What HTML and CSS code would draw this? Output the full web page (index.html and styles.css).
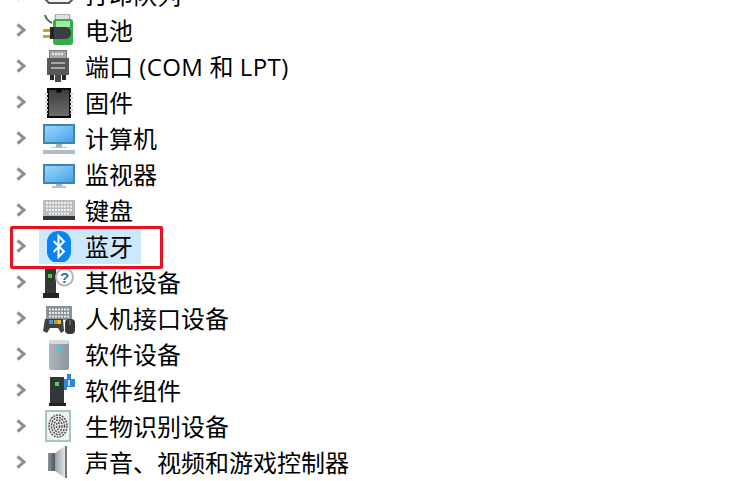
FILE: index.html
```html
<!DOCTYPE html>
<html lang="zh">
<head>
  <meta charset="utf-8">
  <title>设备管理器</title>
  <link rel="stylesheet" href="styles.css">
</head>
<body>
  <svg width="0" height="0" class="defs">
    <defs>
      <symbol id="chevron" viewBox="0 0 10 14">
        <path d="M1.500 1.500 8 7l-6.500 5.500"/>
      </symbol>
      <linearGradient id="screenFill" x1="0" y1="0" x2="1" y2="1">
        <stop offset="0" stop-color="#9ad6fc"/>
        <stop offset="1" stop-color="#47a3e6"/>
      </linearGradient>
      <linearGradient id="towerFill" x1="0" y1="0" x2="1" y2="0">
        <stop offset="0" stop-color="#aeb7bd"/>
        <stop offset="1" stop-color="#8b959c"/>
      </linearGradient>
      <linearGradient id="speakerBack" x1="0" y1="0" x2="1" y2="0">
        <stop offset="0" stop-color="#8d959c"/>
        <stop offset="1" stop-color="#4f575e"/>
      </linearGradient>
      <linearGradient id="speakerCone" x1="0" y1="0" x2="1" y2="0">
        <stop offset="0" stop-color="#9aa0a5"/>
        <stop offset="1" stop-color="#e2e4e6"/>
      </linearGradient>
      <linearGradient id="chipFill" x1="0" y1="0" x2="0" y2="1">
        <stop offset="0" stop-color="#3c3c3c"/>
        <stop offset="1" stop-color="#6e6e6e"/>
      </linearGradient>
    </defs>
  </svg>

  <ul class="tree">
    <li class="row">
      <svg class="chevron"><use href="#chevron"/></svg>
      <span class="item">
        <svg class="icon" viewBox="0 0 32 32">
          <path d="M1 12h30v8l-5 5H6l-5-5z" fill="#f2f3f3" stroke="#55595c" stroke-width="2"/>
        </svg>
        <span class="label">打印队列</span>
      </span>
    </li>
    <li class="row">
      <svg class="chevron"><use href="#chevron"/></svg>
      <span class="item">
        <svg class="icon" viewBox="0 0 32 32">
          <path d="M2 1c1 4 3 6 7 8" fill="none" stroke="#5f5f5f" stroke-width="2"/>
          <rect x="12" y="0" width="15" height="6" rx="2.500" fill="#dfe3df" stroke="#8a8a8a"/>
          <rect x="10" y="5" width="20" height="26" rx="3" fill="#33ad48"/>
          <rect x="13" y="7" width="14" height="6" fill="#a2e6a4"/>
          <path d="M9 13h13c4 0 6 3 6 6s-2 6-6 6H9z" fill="#3a3e41"/>
          <rect x="0" y="15" width="8" height="3" fill="#c9a227"/>
          <rect x="0" y="21" width="8" height="3" fill="#c9a227"/>
          <rect x="7" y="13" width="4" height="12" fill="#232527"/>
        </svg>
        <span class="label">电池</span>
      </span>
    </li>
    <li class="row">
      <svg class="chevron"><use href="#chevron"/></svg>
      <span class="item">
        <svg class="icon" viewBox="0 0 32 32">
          <rect x="6.500" y="0.500" width="17" height="9" fill="#a8a8a8" stroke="#7a7a7a"/>
          <path d="M9 4h12" stroke="#ececec" stroke-width="2" stroke-dasharray="2 1"/>
          <rect x="4" y="8" width="22" height="17" fill="#585858"/>
          <rect x="8" y="12" width="14" height="2" fill="#a6a6a6"/>
          <rect x="8" y="17" width="14" height="2" fill="#a6a6a6"/>
          <rect x="7" y="25" width="4" height="5" fill="#2a2a2a"/>
          <rect x="19" y="25" width="4" height="5" fill="#2a2a2a"/>
          <rect x="12" y="25" width="6" height="7" fill="#4a4a4a"/>
        </svg>
        <span class="label">端口 <span class="latin">(COM</span> 和 <span class="latin">LPT)</span></span>
      </span>
    </li>
    <li class="row">
      <svg class="chevron"><use href="#chevron"/></svg>
      <span class="item">
        <svg class="icon" viewBox="0 0 32 32">
          <rect x="4" y="2" width="24" height="30" fill="#0a0a0a"/>
          <path d="M6 4h7a3 3 0 0 0 6 0h7v26H6z" fill="url(#chipFill)"/>
          <path d="M3.500 7v21M28.500 7v21" stroke="#cfd2d4" stroke-width="3" stroke-dasharray="2 2"/>
        </svg>
        <span class="label">固件</span>
      </span>
    </li>
    <li class="row">
      <svg class="chevron"><use href="#chevron"/></svg>
      <span class="item">
        <svg class="icon" viewBox="0 0 32 32">
          <rect x="0" y="2" width="32" height="20" fill="#3f86ad"/>
          <rect x="2" y="4" width="28" height="16" fill="url(#screenFill)"/>
          <rect x="13" y="22" width="6" height="3" fill="#9fb2bf"/>
          <rect x="8" y="25" width="16" height="1" fill="#b4c2cc"/>
          <rect x="0" y="28" width="32" height="4" fill="#aebcc6"/>
        </svg>
        <span class="label">计算机</span>
      </span>
    </li>
    <li class="row">
      <svg class="chevron"><use href="#chevron"/></svg>
      <span class="item">
        <svg class="icon" viewBox="0 0 32 32">
          <rect x="0" y="6" width="32" height="20" fill="#3f86ad"/>
          <rect x="2" y="8" width="28" height="16" fill="url(#screenFill)"/>
          <rect x="13" y="26" width="6" height="2" fill="#9fb2bf"/>
          <rect x="9" y="28" width="14" height="2" fill="#b4c2cc"/>
        </svg>
        <span class="label">监视器</span>
      </span>
    </li>
    <li class="row">
      <svg class="chevron"><use href="#chevron"/></svg>
      <span class="item">
        <svg class="icon" viewBox="0 0 32 32">
          <rect x="0" y="6" width="32" height="16" fill="#b9bdc0"/>
          <path d="M3 9h26M3 12.500h26M3 16h26M6 19.500h20" stroke="#eef0f1" stroke-width="2" stroke-dasharray="2 1"/>
          <rect x="0" y="22" width="32" height="4" fill="#33373a"/>
        </svg>
        <span class="label">键盘</span>
      </span>
    </li>
    <li class="row">
      <svg class="chevron"><use href="#chevron"/></svg>
      <span class="item item-selected">
        <svg class="icon" viewBox="0 0 32 32">
          <rect x="4" y="1" width="24" height="32" rx="11" fill="#0a84f2"/>
          <path d="M10.500 11 21 21.500 15.500 27V6l5.500 5.500L10.500 22" fill="none" stroke="#fff" stroke-width="2"/>
        </svg>
        <span class="label">蓝牙</span>
      </span>
    </li>
    <li class="row">
      <svg class="chevron"><use href="#chevron"/></svg>
      <span class="item">
        <svg class="icon" viewBox="0 0 32 32">
          <rect x="2" y="2" width="11" height="25" fill="#33373a"/>
          <rect x="5" y="8" width="4" height="4" fill="#3fd13f"/>
          <rect x="0" y="27" width="16" height="5" fill="#222"/>
          <circle cx="21.500" cy="11" r="8.500" fill="#fff" stroke="#b5b5b5" stroke-width="2"/>
          <text x="21.500" y="16.500" class="help-mark">?</text>
        </svg>
        <span class="label">其他设备</span>
      </span>
    </li>
    <li class="row">
      <svg class="chevron"><use href="#chevron"/></svg>
      <span class="item">
        <svg class="icon" viewBox="0 0 32 32">
          <rect x="3" y="4" width="26" height="14" fill="#8b9298"/>
          <path d="M6 7.500h20M6 11h20M6 14.500h20" stroke="#e8eaec" stroke-width="2" stroke-dasharray="2 1"/>
          <path d="M2 17h18l1 12-3 2-3-5H7l-3 5-4-2z" fill="#3f4346"/>
          <rect x="6" y="18" width="4" height="4" fill="#3a9be8"/>
          <rect x="11" y="18" width="4" height="4" fill="#e08a2e"/>
          <rect x="15" y="18" width="3" height="4" fill="#d9c545"/>
          <rect x="22" y="17" width="10" height="15" rx="4" fill="#34383b"/>
          <path d="M27 18v5" stroke="#8b9298"/>
        </svg>
        <span class="label">人机接口设备</span>
      </span>
    </li>
    <li class="row">
      <svg class="chevron"><use href="#chevron"/></svg>
      <span class="item">
        <svg class="icon" viewBox="0 0 32 32">
          <rect x="6" y="2" width="20" height="30" rx="2" fill="url(#towerFill)"/>
          <rect x="6" y="2" width="20" height="4" rx="2" fill="#d4d9dd"/>
          <rect x="14" y="9" width="4" height="5" fill="#2cd4dc"/>
        </svg>
        <span class="label">软件设备</span>
      </span>
    </li>
    <li class="row">
      <svg class="chevron"><use href="#chevron"/></svg>
      <span class="item">
        <svg class="icon" viewBox="0 0 32 32">
          <rect x="7" y="3" width="14" height="26" fill="#33373a"/>
          <rect x="12" y="8" width="4" height="4" fill="#3fe03f"/>
          <rect x="6" y="29" width="17" height="3" fill="#222"/>
          <path d="M21 5h3V0h4v5h4v8h-8v3h-3z" fill="#2f86d8"/>
          <path d="M25 6h2v6h-2z" fill="#bcdcf5"/>
        </svg>
        <span class="label">软件组件</span>
      </span>
    </li>
    <li class="row">
      <svg class="chevron"><use href="#chevron"/></svg>
      <span class="item">
        <svg class="icon" viewBox="0 0 32 32">
          <rect x="3" y="1" width="24" height="30" fill="#eef2f0" stroke="#a9c4bc" stroke-width="2"/>
          <g fill="none" stroke="#555" stroke-width="1.500" stroke-dasharray="2 1">
            <ellipse cx="15" cy="16" rx="9" ry="11"/>
            <ellipse cx="15" cy="16" rx="6.500" ry="8.500"/>
            <ellipse cx="15" cy="16" rx="4" ry="6"/>
            <ellipse cx="15" cy="16" rx="1.500" ry="3.500"/>
          </g>
        </svg>
        <span class="label">生物识别设备</span>
      </span>
    </li>
    <li class="row">
      <svg class="chevron"><use href="#chevron"/></svg>
      <span class="item">
        <svg class="icon" viewBox="0 0 32 32">
          <path d="M12 7 22 0v32L12 25z" fill="url(#speakerCone)"/>
          <rect x="5" y="7" width="7" height="18" fill="url(#speakerBack)"/>
          <rect x="22" y="0" width="2" height="32" fill="#70777d"/>
        </svg>
        <span class="label">声音、视频和游戏控制器</span>
      </span>
    </li>
  </ul>

  <div class="callout"></div>
</body>
</html>
```

FILE: styles.css
```css
html, body {
  height: 100%;
}

body {
  margin: 0;
  overflow: hidden;
  position: relative;
  background-color: white;
  color: #000;
  font-family: "Open Sans", "Noto Sans CJK SC", sans-serif;
  font-size: 24px;
}

.defs {
  display: block;
}

.tree {
  list-style: none;
  margin: -24px 0 0 0;
  padding: 0 0 0 16px;
}

.row {
  display: flex;
  align-items: center;
  height: 36px;
}

.chevron {
  width: 10px;
  height: 14px;
  margin-right: 13px;
  flex: none;
  fill: none;
  stroke: #8f8f8f;
  stroke-width: 3;
}

.item {
  display: flex;
  align-items: center;
  height: 36px;
  padding-left: 4px;
  padding-right: 8px;
}

.item-selected {
  background-color: #cce8ff;
}

.icon {
  width: 32px;
  height: 32px;
  flex: none;
  margin-right: 10px;
}

.label {
  line-height: 36px;
  margin-top: 2px;
  white-space: nowrap;
}

.latin {
  letter-spacing: 0.4px;
}

.help-mark {
  font-family: "Liberation Sans", sans-serif;
  font-size: 15px;
  font-weight: bold;
  fill: #2f6fb5;
  text-anchor: middle;
}

.callout {
  position: absolute;
  left: 10px;
  top: 226px;
  width: 147px;
  height: 37px;
  border: 3px solid #e81123;
  border-radius: 2px;
}
```
